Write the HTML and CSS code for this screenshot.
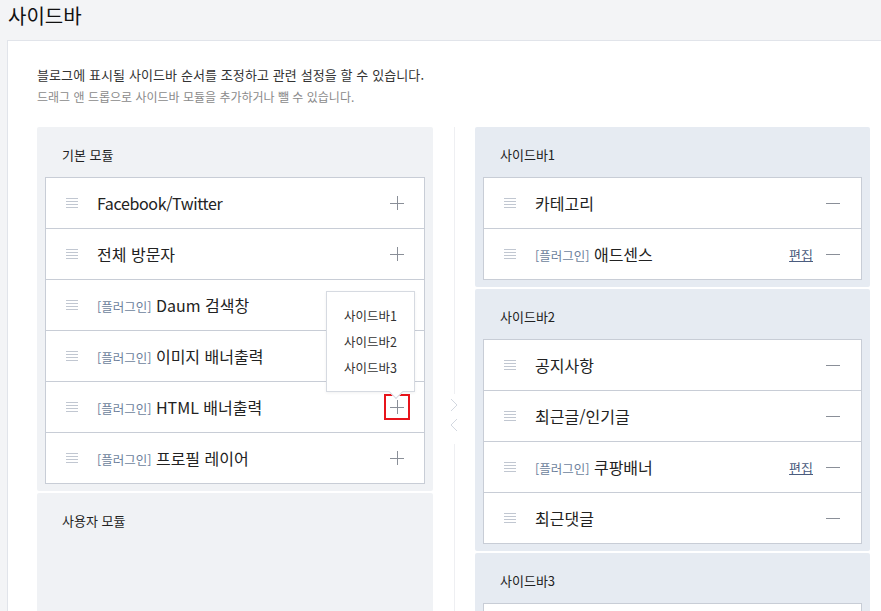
FILE: index.html
```html
<!DOCTYPE html>
<html lang="ko">
<head>
    <meta charset="UTF-8">
    <title>사이드바</title>
    <link rel="stylesheet" href="styles.css">
</head>
<body>
    <h1 class="page-title">사이드바</h1>

    <div class="card">
        <p class="desc">블로그에 표시될 사이드바 순서를 조정하고 관련 설정을 할 수 있습니다.</p>
        <p class="desc-sub">드래그 앤 드롭으로 사이드바 모듈을 추가하거나 뺄 수 있습니다.</p>

        <div class="columns">
            <div class="col">
                <div class="panel">
                    <div class="panel-title">기본 모듈</div>
                    <ul class="module-list">
                        <li class="module">
                            <span class="handle"></span>
                            <span class="name latin">Facebook/Twitter</span>
                            <span class="act plus"></span>
                        </li>
                        <li class="module">
                            <span class="handle"></span>
                            <span class="name">전체 방문자</span>
                            <span class="act plus"></span>
                        </li>
                        <li class="module">
                            <span class="handle"></span>
                            <span class="name"><em>[플러그인]</em> Daum 검색창</span>
                            <span class="act plus"></span>
                        </li>
                        <li class="module">
                            <span class="handle"></span>
                            <span class="name"><em>[플러그인]</em> 이미지 배너출력</span>
                            <span class="act plus"></span>
                        </li>
                        <li class="module">
                            <span class="handle"></span>
                            <span class="name"><em>[플러그인]</em> HTML 배너출력</span>
                            <span class="act plus selected">
                                <div class="popup">
                                    <div class="popup-item">사이드바1</div>
                                    <div class="popup-item">사이드바2</div>
                                    <div class="popup-item">사이드바3</div>
                                </div>
                            </span>
                        </li>
                        <li class="module">
                            <span class="handle"></span>
                            <span class="name"><em>[플러그인]</em> 프로필 레이어</span>
                            <span class="act plus"></span>
                        </li>
                    </ul>
                </div>
                <div class="panel panel-tall">
                    <div class="panel-title">사용자 모듈</div>
                </div>
            </div>

            <div class="divider">
                <div class="divider-line top"></div>
                <div class="divider-arrows">
                    <svg width="10" height="36" viewBox="0 0 10 36"><path d="M2 1 L8 7 L2 13" fill="none" stroke="#d3d8e0" stroke-width="1"/><path d="M8 21 L2 27 L8 33" fill="none" stroke="#d3d8e0" stroke-width="1"/></svg>
                </div>
                <div class="divider-line"></div>
            </div>

            <div class="col">
                <div class="panel side">
                    <div class="panel-title">사이드바1</div>
                    <ul class="module-list">
                        <li class="module">
                            <span class="handle"></span>
                            <span class="name">카테고리</span>
                            <span class="act minus"></span>
                        </li>
                        <li class="module">
                            <span class="handle"></span>
                            <span class="name"><em>[플러그인]</em> 애드센스</span>
                            <a class="edit" href="#">편집</a>
                            <span class="act minus"></span>
                        </li>
                    </ul>
                </div>
                <div class="panel side">
                    <div class="panel-title">사이드바2</div>
                    <ul class="module-list">
                        <li class="module">
                            <span class="handle"></span>
                            <span class="name">공지사항</span>
                            <span class="act minus"></span>
                        </li>
                        <li class="module">
                            <span class="handle"></span>
                            <span class="name">최근글/인기글</span>
                            <span class="act minus"></span>
                        </li>
                        <li class="module">
                            <span class="handle"></span>
                            <span class="name"><em>[플러그인]</em> 쿠팡배너</span>
                            <a class="edit" href="#">편집</a>
                            <span class="act minus"></span>
                        </li>
                        <li class="module">
                            <span class="handle"></span>
                            <span class="name">최근댓글</span>
                            <span class="act minus"></span>
                        </li>
                    </ul>
                </div>
                <div class="panel side">
                    <div class="panel-title">사이드바3</div>
                    <ul class="module-list">
                        <li class="module">
                            <span class="handle"></span>
                            <span class="name"></span>
                            <span class="act minus"></span>
                        </li>
                    </ul>
                </div>
            </div>
        </div>
    </div>
</body>
</html>
```

FILE: styles.css
```css
body {
    margin: 0;
    background: #f3f4f6;
    font-family: "Noto Sans CJK KR", "Noto Sans", sans-serif;
    color: #222;
    overflow: hidden;
}
.page-title {
    margin: 0;
    height: 40px;
    padding-left: 8px;
    font-size: 20px;
    font-weight: normal;
    line-height: 32px;
    color: #111;
}
.card {
    margin-left: 7px;
    background: #fff;
    border-top: 1px solid #e1e4ea;
    border-left: 1px solid #e1e4ea;
    padding: 23px 11px 0 29px;
    height: 600px;
}
.desc {
    margin: 0;
    font-size: 13px;
    line-height: 22px;
    letter-spacing: 0.1px;
    color: #333;
}
.desc-sub {
    margin: 1px 0 0;
    font-size: 12px;
    line-height: 20px;
    color: #8a8a8a;
}
.columns {
    display: flex;
    margin-top: 20px;
}
.col {
    display: flex;
    flex-direction: column;
    gap: 2px;
}
.col:first-child {
    width: 396px;
}
.col:last-child {
    width: 395px;
}
.panel {
    background: #f0f2f5;
    border-radius: 2px;
    padding: 0 8px 7px;
}
.panel.side {
    background: #e6ebf2;
}
.panel-tall {
    height: 200px;
}
.panel-title {
    height: 50px;
    line-height: 56px;
    padding-left: 17px;
    font-size: 13px;
    color: #222;
}
.module-list {
    list-style: none;
    margin: 0;
    padding: 0;
    background: #fff;
    border: 1px solid #c8cdd6;
}
.module {
    display: flex;
    align-items: center;
    height: 50px;
    padding: 0 20px 0 20px;
    border-top: 1px solid #c8cdd6;
}
.module:first-child {
    border-top: none;
}
.handle {
    width: 12px;
    height: 10px;
    margin-right: 19px;
    background: repeating-linear-gradient(to bottom, #c1c7d1 0, #c1c7d1 1px, transparent 1px, transparent 3px);
}
.name {
    flex: 1;
    font-size: 16px;
    color: #222;
}
.name.latin {
    letter-spacing: -0.35px;
}
.name em {
    font-style: normal;
    font-size: 12.5px;
    color: #6d7f9c;
}
.act {
    position: relative;
    width: 14px;
    height: 14px;
}
.plus::before,
.plus::after,
.minus::before {
    content: "";
    position: absolute;
    background: #8a8f98;
}
.plus::before,
.minus::before {
    left: 0;
    top: 7px;
    width: 14px;
    height: 1px;
}
.plus::after {
    left: 7px;
    top: 0;
    width: 1px;
    height: 14px;
}
.plus.selected {
    outline: 2px solid #e8141b;
    outline-offset: 4px;
}
.minus {
    margin-right: 1px;
}
.edit {
    font-size: 13px;
    color: #4b5c7e;
    margin-right: 13px;
}
.popup {
    position: absolute;
    right: -11px;
    bottom: 22px;
    width: 87px;
    padding: 11px 0 10px;
    background: #fff;
    border: 1px solid #d6dae1;
    box-shadow: 0 1px 3px rgba(0, 0, 0, 0.06);
    text-align: center;
    z-index: 2;
}
.popup::after {
    content: "";
    position: absolute;
    right: 13px;
    bottom: -6px;
    width: 9px;
    height: 9px;
    background: #fff;
    border-right: 1px solid #d6dae1;
    border-bottom: 1px solid #d6dae1;
    transform: rotate(45deg);
}
.popup-item {
    font-size: 12.5px;
    line-height: 26px;
    color: #333;
}
.divider {
    width: 42px;
    display: flex;
    flex-direction: column;
    align-items: center;
}
.divider-line {
    width: 1px;
    background: #eeeff2;
    flex: 1;
}
.divider-line.top {
    flex: none;
    height: 267px;
}
.divider-arrows {
    padding: 4px 0 10px;
    line-height: 0;
}
```
